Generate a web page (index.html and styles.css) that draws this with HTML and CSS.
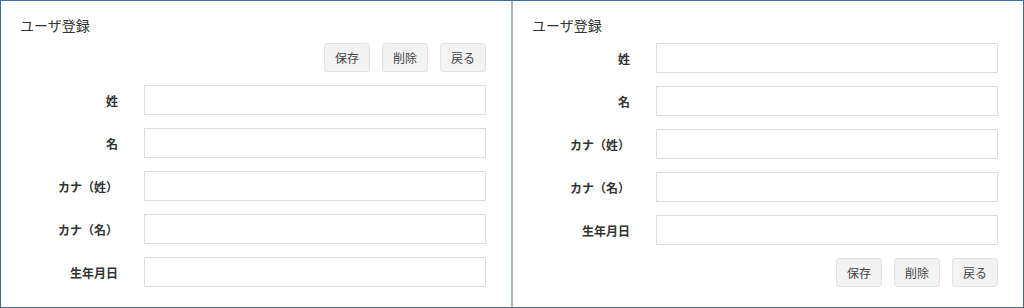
FILE: index.html
```html
<!DOCTYPE html>
<html lang="ja">
<head>
    <meta charset="UTF-8">
    <meta name="viewport" content="width=device-width, initial-scale=1.0">
    <title>ユーザ登録</title>
    <link rel="stylesheet" href="styles.css">
</head>
<body>
    <div class="frame">
        <!-- 上部ボタン -->
        <div class="panel">
            <h2 class="panel-title">ユーザ登録</h2>
            <div class="btn-row">
                <button class="btn">保存</button>
                <button class="btn">削除</button>
                <button class="btn">戻る</button>
            </div>
            <div class="form-row top-gap">
                <label class="form-label">姓</label>
                <input type="text" class="form-input">
            </div>
            <div class="form-row">
                <label class="form-label">名</label>
                <input type="text" class="form-input">
            </div>
            <div class="form-row">
                <label class="form-label">カナ（姓）</label>
                <input type="text" class="form-input">
            </div>
            <div class="form-row">
                <label class="form-label">カナ（名）</label>
                <input type="text" class="form-input">
            </div>
            <div class="form-row">
                <label class="form-label">生年月日</label>
                <input type="text" class="form-input">
            </div>
        </div>

        <div class="divider"></div>

        <!-- 下部ボタン -->
        <div class="panel">
            <h2 class="panel-title">ユーザ登録</h2>
            <div class="form-row">
                <label class="form-label">姓</label>
                <input type="text" class="form-input">
            </div>
            <div class="form-row">
                <label class="form-label">名</label>
                <input type="text" class="form-input">
            </div>
            <div class="form-row">
                <label class="form-label">カナ（姓）</label>
                <input type="text" class="form-input">
            </div>
            <div class="form-row">
                <label class="form-label">カナ（名）</label>
                <input type="text" class="form-input">
            </div>
            <div class="form-row">
                <label class="form-label">生年月日</label>
                <input type="text" class="form-input">
            </div>
            <div class="btn-row bottom">
                <button class="btn">保存</button>
                <button class="btn">削除</button>
                <button class="btn">戻る</button>
            </div>
        </div>
    </div>
</body>
</html>
```

FILE: styles.css
```css
body {
    margin: 0;
    font-family: 'Noto Sans CJK JP', 'Noto Sans', sans-serif;
    color: #333;
    background: white;
}
.frame {
    width: 1024px;
    height: 308px;
    box-sizing: border-box;
    border: 1px solid #4a6a90;
    display: flex;
}
.panel {
    width: 510px;
    box-sizing: border-box;
    padding: 14px 25px 0 19px;
}
.divider {
    width: 2px;
    background: #a5b7cc;
}
.panel-title {
    margin: 0 0 8px;
    font-size: 14px;
    font-weight: normal;
    line-height: 20px;
    color: #333;
}
.btn-row {
    display: flex;
    justify-content: flex-end;
    gap: 12px;
}
.btn-row.bottom {
    margin-top: 1px;
}
.btn {
    height: 29px;
    padding: 0 10px;
    border: 1px solid #e3e3e3;
    border-radius: 3px;
    background: #f3f3f3;
    color: #444;
    font-family: inherit;
    font-size: 12px;
    cursor: pointer;
}
.form-row {
    display: flex;
    align-items: center;
    margin-bottom: 13px;
}
.form-row.top-gap {
    margin-top: 13px;
}
.form-label {
    width: 98px;
    margin-right: 26px;
    text-align: right;
    font-size: 12px;
    font-weight: bold;
    color: #333;
}
.form-input {
    width: 342px;
    height: 30px;
    box-sizing: border-box;
    border: 1px solid #dcdce3;
    border-radius: 0;
    padding: 0 6px;
    font-size: 12px;
}
```
